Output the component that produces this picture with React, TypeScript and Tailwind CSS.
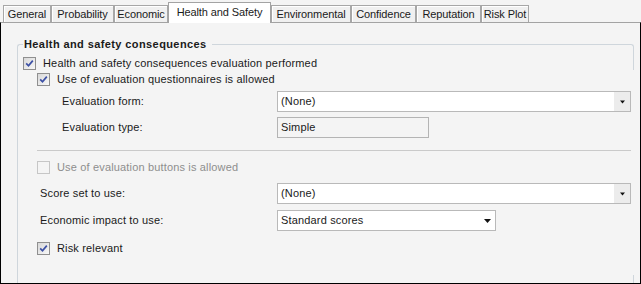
const tabs = [
  { label: "General", w: "w-[48px]" },
  { label: "Probability", w: "w-[63px]" },
  { label: "Economic", w: "w-[54px]" },
  { label: "Health and Safety", w: "w-[103px]", active: true },
  { label: "Environmental", w: "w-[80px]" },
  { label: "Confidence", w: "w-[65px]" },
  { label: "Reputation", w: "w-[65px]" },
  { label: "Risk Plot", w: "w-[48px]" },
];

const CheckBox = ({ checked, disabled }: { checked?: boolean; disabled?: boolean }) => (
  <span
    className={
      disabled
        ? "w-[13px] h-[13px] shrink-0 border border-[#c6c6c6] bg-[#f4f4f4]"
        : "w-[13px] h-[13px] shrink-0 border border-[#8f8f8f] bg-gradient-to-br from-[#d8d8d8] to-[#f8f8f8] flex items-center justify-center"
    }
  >
    {checked && (
      <svg width="9" height="9" viewBox="0 0 9 9">
        <path d="M1.2 4.4 L3.5 6.8 L7.8 1.6" fill="none" stroke="#3c50a5" strokeWidth="1.7" />
      </svg>
    )}
  </span>
);

const SmallArrow = () => (
  <svg width="5" height="4" viewBox="0 0 5 4">
    <path d="M0 0.5 H5 L2.5 3.5 Z" fill="#111" />
  </svg>
);

const BigArrow = () => (
  <svg width="7" height="4" viewBox="0 0 7 4">
    <path d="M0 0 H7 L3.5 4 Z" fill="#111" />
  </svg>
);

const Combo = ({ value, w }: { value: string; w: string }) => (
  <div className={`${w} h-[21px] border border-[#b9b9b9] bg-white flex items-center`}>
    <span className="flex-1 pl-[3px]">{value}</span>
    <span className="w-[16px] h-full bg-[#ececec] flex items-center justify-center">
      <SmallArrow />
    </span>
  </div>
);

export default function App() {
  return (
    <div className="w-[641px] h-[284px] bg-[#f4f4f4] flex flex-col font-['Liberation_Sans',Arial,sans-serif] text-[11px] text-[#1a1a1a] leading-none overflow-hidden">
      {/* tab strip */}
      <div className="h-[22px] flex items-end pl-[3px] shrink-0 tracking-[-0.1px]">
        {tabs.map((t) =>
          t.active ? (
            <div
              key={t.label}
              className={`${t.w} h-[21px] -mb-px relative z-10 bg-white border border-b-0 border-[#a3a3a3] flex items-center justify-center pb-[2px]`}
            >
              {t.label}
            </div>
          ) : (
            <div
              key={t.label}
              className={`${t.w} h-[17px] bg-[#f0f0f0] border border-b-0 border-[#a7a7a7] shadow-[inset_1px_1px_0_#ffffff] flex items-center justify-center`}
            >
              {t.label}
            </div>
          )
        )}
      </div>

      {/* panel */}
      <div className="flex-1 flex flex-col border-t border-t-[#a3a3a3] border-l border-r border-b border-l-black border-r-black border-b-black tracking-[0.16px]">
        <div className="ml-[16px] mt-[14px] w-[617px] flex-1 flex flex-col">
          {/* group title */}
          <div className="h-[14px] flex items-center">
            <div className="self-end w-[6px] h-[7px] border-l border-t border-[#cfd6dc] rounded-tl-[3px]" />
            <span className="pl-[1px] pr-[5px] font-bold tracking-[0.4px]">Health and safety consequences</span>
            <div className="self-end flex-1 h-[7px] border-t border-[#cfd6dc]" />
            <div className="self-end w-[3px] h-[7px] border-t border-r border-[#cfd6dc] rounded-tr-[3px]" />
          </div>

          {/* group body */}
          <div className="flex-1 flex">
            <div className="flex-1 border-l border-[#cfd6dc] flex flex-col">
              <div className="mt-[4px] h-[16px] flex items-center pl-[5px] gap-[7px]">
                <CheckBox checked />
                <span>Health and safety consequences evaluation performed</span>
              </div>
              <div className="h-[16px] flex items-center pl-[19px] gap-[7px]">
                <CheckBox checked />
                <span>Use of evaluation questionnaires is allowed</span>
              </div>

              <div className="mt-[4px] flex items-center pl-[44px]">
                <span className="w-[215px]">Evaluation form:</span>
                <Combo value="(None)" w="w-[354px]" />
              </div>
              <div className="mt-[5px] flex items-center pl-[44px]">
                <span className="w-[215px]">Evaluation type:</span>
                <div className="w-[152px] h-[21px] border border-[#b4b4b4] flex items-center pl-[3px]">Simple</div>
              </div>

              <div className="mt-[12px] ml-[19px] w-[594px] h-px bg-[#cacaca]" />

              <div className="mt-[8px] h-[16px] flex items-center pl-[19px] gap-[7px] text-[#8e8e8e]">
                <CheckBox disabled />
                <span>Use of evaluation buttons is allowed</span>
              </div>

              <div className="mt-[8px] flex items-center pl-[22px]">
                <span className="w-[237px]">Score set to use:</span>
                <Combo value="(None)" w="w-[354px]" />
              </div>
              <div className="mt-[6px] flex items-center pl-[22px]">
                <span className="w-[237px]">Economic impact to use:</span>
                <div className="w-[219px] h-[21px] border border-[#b9b9b9] bg-white flex items-center pl-[3px] pr-[4px]">
                  <span className="flex-1">Standard scores</span>
                  <BigArrow />
                </div>
              </div>

              <div className="mt-[9px] h-[16px] flex items-center pl-[19px] gap-[7px]">
                <CheckBox checked />
                <span>Risk relevant</span>
              </div>
            </div>
            <div className="w-px flex flex-col justify-between">
              <div className="h-[19px] bg-[#cfd6dc]" />
              <div className="h-[8px] bg-[#cfd6dc]" />
            </div>
          </div>
        </div>
      </div>
    </div>
  );
}
